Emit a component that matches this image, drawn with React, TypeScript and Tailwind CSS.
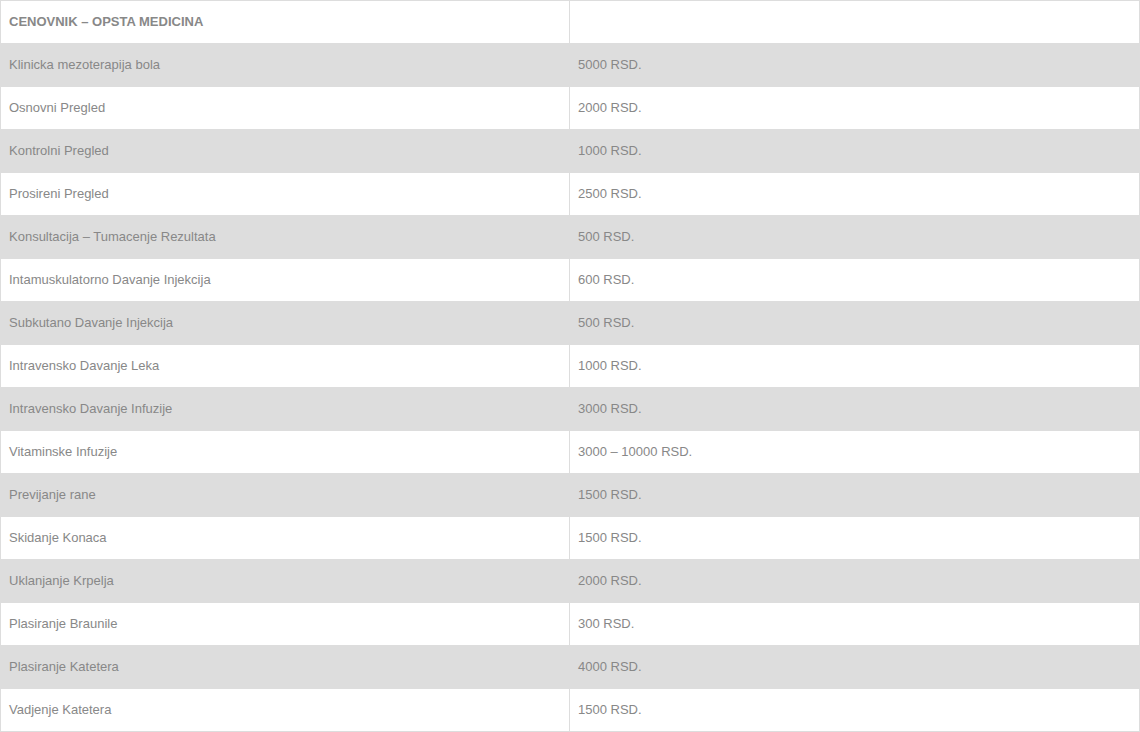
const rows: [string, string][] = [
  ["Klinicka mezoterapija bola", "5000 RSD."],
  ["Osnovni Pregled", "2000 RSD."],
  ["Kontrolni Pregled", "1000 RSD."],
  ["Prosireni Pregled", "2500 RSD."],
  ["Konsultacija – Tumacenje Rezultata", "500 RSD."],
  ["Intamuskulatorno Davanje Injekcija", "600 RSD."],
  ["Subkutano Davanje Injekcija", "500 RSD."],
  ["Intravensko Davanje Leka", "1000 RSD."],
  ["Intravensko Davanje Infuzije", "3000 RSD."],
  ["Vitaminske Infuzije", "3000 – 10000 RSD."],
  ["Previjanje rane", "1500 RSD."],
  ["Skidanje Konaca", "1500 RSD."],
  ["Uklanjanje Krpelja", "2000 RSD."],
  ["Plasiranje Braunile", "300 RSD."],
  ["Plasiranje Katetera", "4000 RSD."],
  ["Vadjenje Katetera", "1500 RSD."],
];

export default function App() {
  return (
    <div className="w-[1140px] bg-white font-['Liberation_Sans',Arial,sans-serif] text-[13px] text-[#888888]">
      <table className="w-full table-fixed border-collapse">
        <tbody>
          <tr className="h-[43px]">
            <td className="w-[569px] border border-[#dddddd] px-2 align-middle font-bold">
              CENOVNIK – OPSTA MEDICINA
            </td>
            <td className="border border-[#dddddd] px-2 align-middle"></td>
          </tr>
          {rows.map(([name, price], i) => (
            <tr key={name} className={i % 2 === 0 ? "h-[43px] bg-[#dddddd]" : "h-[43px] bg-white"}>
              <td className="border border-[#dddddd] px-2 align-middle">{name}</td>
              <td className="border border-[#dddddd] px-2 align-middle">{price}</td>
            </tr>
          ))}
        </tbody>
      </table>
    </div>
  );
}
